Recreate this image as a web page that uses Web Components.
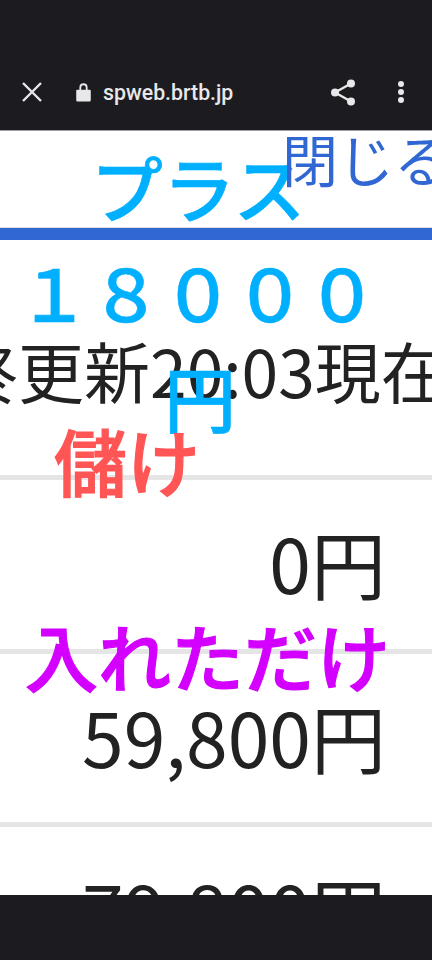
<!DOCTYPE html>
<html lang="ja">
<head>
<meta charset="utf-8">
<title>spweb.brtb.jp</title>
<style>
    html, body { margin: 0; height: 100%; background: #1c1c20; }
    body { font-family: "Noto Sans CJK JP", "Noto Sans", sans-serif; }
</style>
</head>
<body>
<browser-frame url="spweb.brtb.jp">
    <page-header title-text="プラス" close-text="閉じる"></page-header>
    <total-block amount="１８０００" unit="円" updated="最終更新20:03現在"></total-block>
    <amount-row label="儲け" label-color="#ff5555" label-left="54" label-top="-52" value="0円"></amount-row>
    <amount-row label="入れただけ" label-color="#d400ff" label-left="25" label-top="-31" value="59,800円"></amount-row>
    <amount-row value="79,800円"></amount-row>
</browser-frame>

<script>
class BrowserFrame extends HTMLElement {
    constructor() {
        super();
        this.attachShadow({ mode: 'open' });
        this.shadowRoot.innerHTML = `
            <style>
                :host { display: flex; flex-direction: column; height: 960px; width: 432px; overflow: hidden; background: #1c1c20; }
                .toolbar {
                    flex: none;
                    height: 131px;
                    box-sizing: border-box;
                    padding: 72px 0 0 21px;
                    display: flex;
                    align-items: flex-start;
                    color: #e8e8ea;
                    border-bottom: 1px solid #a0a0a4;
                }
                svg { display: block; flex: none; }
                .url {
                    margin-left: 12px;
                    font: 500 21.300px/42px Roboto, sans-serif;
                    flex: 1;
                }
                .close { margin-top: 9px; }
                .lock { margin-left: 33px; margin-top: 10px; }
                .share { margin-right: 41px; margin-top: 7px; }
                .more { margin-right: 27px; margin-top: 8px; }
                main { flex: 1; min-height: 0; overflow: hidden; background: #fff; }
                .bottom { flex: none; height: 65px; background: #1c1c20; }
            </style>
            <div class="toolbar">
                <svg class="close" width="22" height="22" viewBox="0 0 22 22"><path d="M2 2L20 20M20 2L2 20" stroke="currentColor" stroke-width="2.400" fill="none"/></svg>
                <svg class="lock" width="15" height="20" viewBox="0 0 16 22"><path d="M1 8.500h14a1 1 0 0 1 1 1V20a1.500 1.500 0 0 1-1.500 1.500h-13A1.500 1.500 0 0 1 0 20V9.500a1 1 0 0 1 1-1zM3.500 8.500V6a4.500 4.500 0 0 1 9 0v2.500h-2V6a2.500 2.500 0 0 0-5 0v2.500z" fill="currentColor"/></svg>
                <span class="url"></span>
                <svg class="share" width="25" height="27" viewBox="0 0 25 27"><circle cx="20" cy="4.500" r="4" fill="currentColor"/><circle cx="4" cy="13.500" r="4" fill="currentColor"/><circle cx="20" cy="22.500" r="4" fill="currentColor"/><path d="M20 4.500L4 13.500L20 22.500" stroke="currentColor" stroke-width="2.400" fill="none"/></svg>
                <svg class="more" width="8" height="24" viewBox="0 0 8 24"><circle cx="4" cy="4" r="3" fill="currentColor"/><circle cx="4" cy="12" r="3" fill="currentColor"/><circle cx="4" cy="20" r="3" fill="currentColor"/></svg>
            </div>
            <main><slot></slot></main>
            <div class="bottom"></div>
        `;
        this.shadowRoot.querySelector('.url').textContent = this.getAttribute('url');
    }
}
customElements.define('browser-frame', BrowserFrame);

class PageHeader extends HTMLElement {
    constructor() {
        super();
        this.attachShadow({ mode: 'open' });
        this.shadowRoot.innerHTML = `
            <style>
                :host { display: block; height: 97px; border-bottom: 12px solid #3167d3; box-shadow: inset 0 -1px 0 #ddd; overflow: hidden; }
                .wrap { display: flex; padding-left: 91px; }
                h1 { margin: 19px 0 0; flex: none; font: 500 72px/72px "Noto Sans CJK JP", sans-serif; color: #00b0ff; width: 191px; white-space: nowrap; -webkit-text-stroke: 0.6px #00b0ff; }
                a { flex: none; font: 400 56px/54px "Noto Sans CJK JP", sans-serif; color: #3167d3; white-space: nowrap; }
            </style>
            <div class="wrap"><h1></h1><a></a></div>
        `;
        this.shadowRoot.querySelector('h1').textContent = this.getAttribute('title-text');
        this.shadowRoot.querySelector('a').textContent = this.getAttribute('close-text');
    }
}
customElements.define('page-header', PageHeader);

class TotalBlock extends HTMLElement {
    constructor() {
        super();
        this.attachShadow({ mode: 'open' });
        this.shadowRoot.innerHTML = `
            <style>
                :host { display: block; height: 235px; position: relative; }
                .amount { position: absolute; z-index: 1; top: -2px; left: 18px; font: 500 72px/105px "Noto Sans CJK JP", sans-serif; color: #00b0ff; white-space: nowrap; -webkit-text-stroke: 0.6px #00b0ff; }
                .unit { display: block; padding-left: 146px; }
                .updated { font: 400 66px/70px "Noto Sans CJK JP", sans-serif; color: #222; white-space: nowrap; padding-top: 94px; margin-left: -114px; }
            </style>
            <div class="amount"><span class="digits"></span><span class="unit"></span></div>
            <div class="updated"></div>
        `;
        this.shadowRoot.querySelector('.digits').textContent = this.getAttribute('amount');
        this.shadowRoot.querySelector('.unit').textContent = this.getAttribute('unit');
        this.shadowRoot.querySelector('.updated').textContent = this.getAttribute('updated');
    }
}
customElements.define('total-block', TotalBlock);

class AmountRow extends HTMLElement {
    constructor() {
        super();
        this.attachShadow({ mode: 'open' });
        this.shadowRoot.innerHTML = `
            <style>
                :host { display: block; height: 173.600px; position: relative; }
                .label { position: absolute; z-index: 1; font: 500 73px/72px "Noto Sans CJK JP", sans-serif; white-space: nowrap; -webkit-text-stroke: 1.200px currentColor; }
                hr { margin: 0; border: 0; height: 5px; background: #e5e5e5; }
                .value { font: 400 75px/80px "Noto Sans CJK JP", sans-serif; color: #222; text-align: right; padding: 42px 46px 0 0; }
            </style>
            <hr>
            <div class="label"></div>
            <div class="value"></div>
        `;
        const label = this.shadowRoot.querySelector('.label');
        label.textContent = this.getAttribute('label') || '';
        label.style.color = this.getAttribute('label-color');
        label.style.left = (this.getAttribute('label-left') || 0) + 'px';
        label.style.top = (this.getAttribute('label-top') || 0) + 'px';
        this.shadowRoot.querySelector('.value').textContent = this.getAttribute('value');
    }
}
customElements.define('amount-row', AmountRow);
</script>
</body>
</html>
